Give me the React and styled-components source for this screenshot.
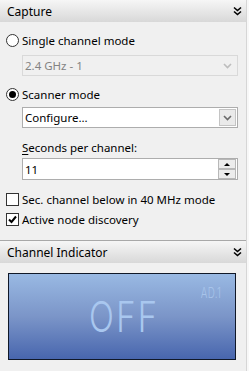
import styled, { createGlobalStyle } from "styled-components";

const Global = createGlobalStyle`
html, body, #root {
  margin: 0;
  height: 100%;
}
body {
  font-family: "Segoe UI", "Noto Sans", sans-serif;
  font-size: 11.5px;
  color: #000;
  background: #f8f8f8;
}
`

const Shell = styled.div`
display: flex;
height: 100%;
`
const Panel = styled.div`
width: 246px;
height: 100%;
background: #f0f0f0;
border-right: 1px solid #d6d6d6;
display: flex;
flex-direction: column;
`
const Header = styled.div`
display: flex;
align-items: center;
justify-content: space-between;
height: 22px;
padding: 0 4px 0 7px;
font-size: 12px;
background: linear-gradient(#f6f6f6, #d8d8d8);
border-top: ${({ $line }) => $line ? "1px solid #a8a8a8" : "none"};
margin-top: ${({ $top }) => $top || 0}px;
`
const Section = styled.div`
display: flex;
flex-direction: column;
padding: 0 8px 0 6px;
`
const OptionRow = styled.label`
display: flex;
align-items: center;
gap: 3px;
height: 18px;
margin-top: ${({ $top }) => $top}px;
`
const Radio = styled.span`
width: 11px;
height: 11px;
border: 1px solid #333;
border-radius: 50%;
background: #fff;
display: flex;
align-items: center;
justify-content: center;
&::after{
  content: "";
  width: 7px;
  height: 7px;
  border-radius: 50%;
  background: ${({ $on }) => $on ? "#000" : "transparent"};
}
`
const Check = styled.span`
width: 11px;
height: 11px;
border: 1px solid #333;
background: #fff;
display: flex;
align-items: center;
justify-content: center;
`
const Combo = styled.div`
display: flex;
align-items: center;
justify-content: space-between;
margin: ${({ $top }) => $top}px 0 0 16px;
height: 19px;
padding: 0 1px 0 2px;
border: 1px solid ${({ $off }) => $off ? "#d9d9d9" : "#adadad"};
background: ${({ $off }) => $off ? "#f0f0f0" : "#fff"};
color: ${({ $off }) => $off ? "#838383" : "#000"};
`
const DropButton = styled.span`
width: 15px;
height: 15px;
display: flex;
align-items: center;
justify-content: center;
border: 1px solid ${({ $off }) => $off ? "transparent" : "#c4c4c4"};
background: ${({ $off }) => $off ? "transparent" : "#eaeaea"};
`
const Caption = styled.div`
margin: 10px 0 0 16px;
height: 18px;
display: flex;
align-items: center;
& u { text-decoration-thickness: 1px; text-underline-offset: 2px; }
`
const Spin = styled.div`
display: flex;
align-items: center;
justify-content: space-between;
margin: 2px 0 0 16px;
height: 20px;
padding: 0 1px 0 2px;
border: 1px solid #adadad;
background: #fff;
`
const Steps = styled.div`
display: flex;
flex-direction: column;
`
const Step = styled.span`
width: 16px;
height: 8px;
border: 1px solid #b8b8b8;
background: #ececec;
display: flex;
align-items: center;
justify-content: center;
&::after{
  content: "";
  border-left: 3px solid transparent;
  border-right: 3px solid transparent;
  ${({ $up }) => $up ? "border-bottom: 3px solid #000;" : "border-top: 3px solid #000;"}
}
`
const Lcd = styled.div`
position: relative;
margin: 10px 0 0 8px;
width: 226px;
height: 85px;
border: 1px solid #101828;
background: linear-gradient(#99b9e3, #7b95c8 50%, #4866ae);
display: flex;
align-items: center;
justify-content: center;
`
const Big = styled.span`
font-family: "Inter", "Roboto", sans-serif;
font-weight: 300;
font-size: 42px;
line-height: 1;
letter-spacing: 3px;
color: #a9c7ef;
transform: scaleX(0.78);
margin-left: 4px;
`
const Small = styled.span`
position: absolute;
top: 12px;
right: 14px;
font-family: "Inter", "Roboto", sans-serif;
font-weight: 300;
font-size: 14px;
line-height: 1;
letter-spacing: 0.5px;
color: #a8c4ea;
transform: scaleX(0.7);
transform-origin: right;
`

const Chevrons = () => (
    <svg width="9" height="10" viewBox="0 0 9 10">
        <path d="M1 1.5l3.5 3 3.5-3M1 5.5l3.5 3 3.5-3" fill="none" stroke="#000" strokeWidth="1.6" />
    </svg>
)

const Down = ({ color }) => (
    <svg width="9" height="6" viewBox="0 0 9 6">
        <path d="M1 1l3.5 3.5L8 1" fill="none" stroke={color} strokeWidth="1.6" />
    </svg>
)

const App = () => {
    return (
        <>
            <Global />
            <Shell>
                <Panel>
                    <Header>Capture<Chevrons /></Header>
                    <Section>
                        <OptionRow $top={9}><Radio />Single channel mode</OptionRow>
                        <Combo $off $top={6}>2.4 GHz - 1<DropButton $off><Down color="#bdbdbd" /></DropButton></Combo>
                        <OptionRow $top={9}><Radio $on />Scanner mode</OptionRow>
                        <Combo $top={4}>Configure...<DropButton><Down color="#6a6a6a" /></DropButton></Combo>
                        <Caption><span><u>S</u>econds per channel:</span></Caption>
                        <Spin>11<Steps><Step $up /><Step /></Steps></Spin>
                        <OptionRow $top={10}><Check />Sec. channel below in 40 MHz mode</OptionRow>
                        <OptionRow $top={2}>
                            <Check>
                                <svg width="9" height="9" viewBox="0 0 9 9">
                                    <path d="M1 4.5l2.5 2.5L8 1.5" fill="none" stroke="#000" strokeWidth="2" />
                                </svg>
                            </Check>
                            Active node discovery
                        </OptionRow>
                    </Section>
                    <Header $line $top={12}>Channel Indicator<Chevrons /></Header>
                    <Lcd>
                        <Big>OFF</Big>
                        <Small>AD.1</Small>
                    </Lcd>
                </Panel>
            </Shell>
        </>
    )
}
export default App;
